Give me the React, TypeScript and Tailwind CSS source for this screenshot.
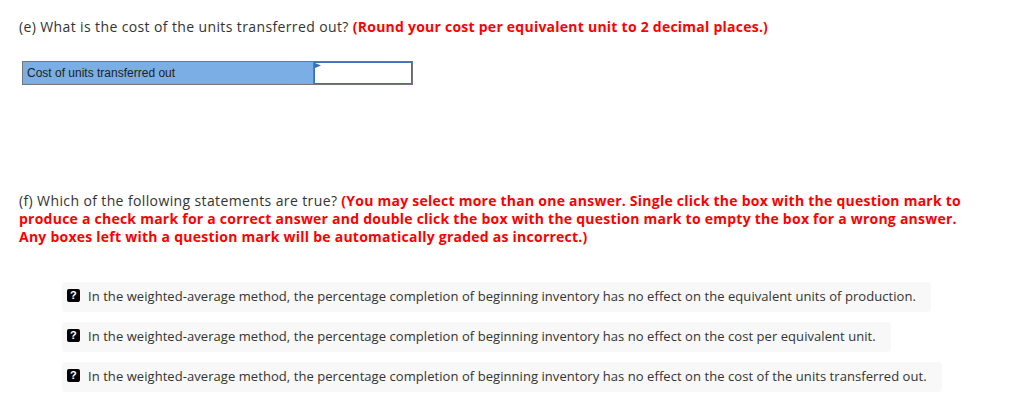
import React from "react";

const options = [
  "In the weighted-average method, the percentage completion of beginning inventory has no effect on the equivalent units of production.",
  "In the weighted-average method, the percentage completion of beginning inventory has no effect on the cost per equivalent unit.",
  "In the weighted-average method, the percentage completion of beginning inventory has no effect on the cost of the units transferred out.",
];

function QBox() {
  return (
    <span className="mt-[-3px] inline-flex h-[13px] w-[13px] shrink-0 items-center justify-center rounded-[2px] bg-black text-[11px] font-bold leading-none text-white font-['Liberation_Sans',sans-serif]">
      ?
    </span>
  );
}

export default function App() {
  return (
    <div className="min-h-[413px] w-[1030px] bg-white pl-[19px] pt-[18px] font-['Open_Sans',sans-serif] text-[14px] text-[#333]">
      <p className="leading-[18px] tracking-[0.38px]">
        (e) What is the cost of the units transferred out?{" "}
        <span className="font-bold tracking-[0.24px] text-[#ff0000]">
          (Round your cost per equivalent unit to 2 decimal places.)
        </span>
      </p>

      <div className="ml-[3px] mt-[25px] flex h-[24px] w-[391px] border border-[#777]">
        <div className="flex w-[290px] items-center bg-[#7aaee5] pl-[4px] font-['Liberation_Sans',sans-serif] text-[12px] text-[#222]">
          Cost of units transferred out
        </div>
        <div className="relative flex-1 border-l border-[#777] bg-white">
          <div className="absolute inset-0 border border-[#3a70b8]" />
          <svg className="absolute left-[1px] top-[1px]" width="6" height="6" viewBox="0 0 6 6">
            <polygon points="0,0 6,2.5 0,5" fill="#3a70b8" />
          </svg>
        </div>
      </div>

      <p className="mt-[107px] w-[950px] leading-[18px] tracking-[0.38px]">
        (f) Which of the following statements are true?{" "}
        <span className="font-bold tracking-[0.24px] text-[#ff0000]">
          (You may select more than one answer. Single click the box with the question mark to produce a check mark for a correct answer and double click the box with the question mark to empty the box for a wrong answer. Any boxes left with a question mark will be automatically graded as incorrect.)
        </span>
      </p>

      <div className="ml-[43px] mt-[36px] flex flex-col items-start gap-[10px]">
        {options.map((o) => (
          <div
            key={o}
            className="flex h-[30px] items-center gap-[8px] rounded-[4px] bg-[#f8f8f8] pl-[5px] pr-[15px] text-[13px] tracking-[0.06px] text-[#333]"
          >
            <QBox />
            <span>{o}</span>
          </div>
        ))}
      </div>
    </div>
  );
}
